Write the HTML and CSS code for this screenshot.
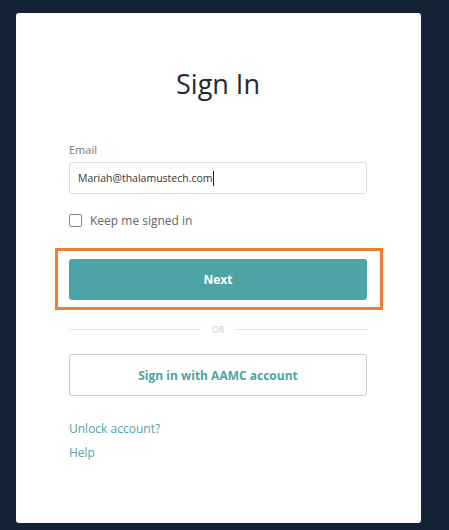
FILE: index.html
```html
<!DOCTYPE html>
<html lang="en">
<head>
    <meta charset="UTF-8">
    <meta name="viewport" content="width=device-width, initial-scale=1.0">
    <title>Sign In</title>
    <link rel="stylesheet" href="styles.css">
</head>
<body>
    <div class="card">
        <h1>Sign In</h1>

        <!-- Email -->
        <label class="label" for="email">Email</label>
        <div class="field" id="email"><span>Mariah@thalamustech.com</span><span class="caret"></span></div>

        <label class="remember">
            <span class="box"></span>
            Keep me signed in
        </label>

        <!-- Highlighted next button -->
        <div class="highlight">
            <button class="btn-primary">Next</button>
        </div>

        <div class="divider">
            <span class="line"></span>
            <span class="or">OR</span>
            <span class="line"></span>
        </div>

        <button class="btn-secondary">Sign in with AAMC account</button>

        <div class="links">
            <a href="#">Unlock account?</a>
            <a href="#">Help</a>
        </div>
    </div>
</body>
</html>
```

FILE: styles.css
```css
body {
    margin: 0;
    padding: 13px 28px 7px 16px;
    background-color: #132335;
    font-family: "Open Sans", Arial, sans-serif;
}
.card {
    background-color: #fff;
    border-radius: 3px;
    height: 510px;
    box-sizing: border-box;
    padding: 0 54px 0 53px;
    overflow: hidden;
}
h1 {
    margin: 0;
    padding-top: 51px;
    text-align: center;
    font-size: 27px;
    font-weight: 400;
    line-height: 40px;
    color: #1d2839;
}
.label {
    display: block;
    margin-top: 39px;
    font-size: 11px;
    line-height: 14px;
    color: #777;
}
.field {
    display: flex;
    align-items: center;
    height: 32px;
    margin-top: 5px;
    padding: 0 8px;
    border: 1px solid #ddd;
    border-radius: 3px;
    box-sizing: border-box;
    font-size: 10.5px;
    color: #333;
}
.caret {
    display: inline-block;
    width: 1px;
    height: 15px;
    background-color: #222;
}
.remember {
    display: flex;
    align-items: center;
    gap: 8px;
    margin-top: 18px;
    font-size: 12px;
    color: #666;
}
.box {
    width: 11px;
    height: 11px;
    border: 1px solid #888;
    border-radius: 2px;
}
.highlight {
    margin: 19px -16px 0 -14px;
    padding: 8px 13px 7px 11px;
    border: 3px solid #ec7f34;
}
button {
    display: block;
    width: 100%;
    height: 41px;
    border-radius: 3px;
    font-family: inherit;
    font-size: 12px;
    font-weight: 700;
    cursor: pointer;
}
.btn-primary {
    background-color: #4ea3a5;
    border: none;
    color: #fff;
}
.divider {
    display: flex;
    align-items: center;
    gap: 12px;
    margin-top: 13px;
    height: 12px;
}
.line {
    flex: 1;
    height: 1px;
    background-color: #e3e3e3;
}
.or {
    font-size: 9px;
    color: #ccc;
}
.btn-secondary {
    margin-top: 19px;
    height: 42px;
    background-color: #fff;
    border: 1px solid #ccc;
    color: #4ea3a5;
}
.links {
    display: flex;
    flex-direction: column;
    gap: 7px;
    margin-top: 24px;
}
.links a {
    font-size: 12px;
    line-height: 17px;
    color: #4ea3a5;
    text-decoration: none;
}
```
